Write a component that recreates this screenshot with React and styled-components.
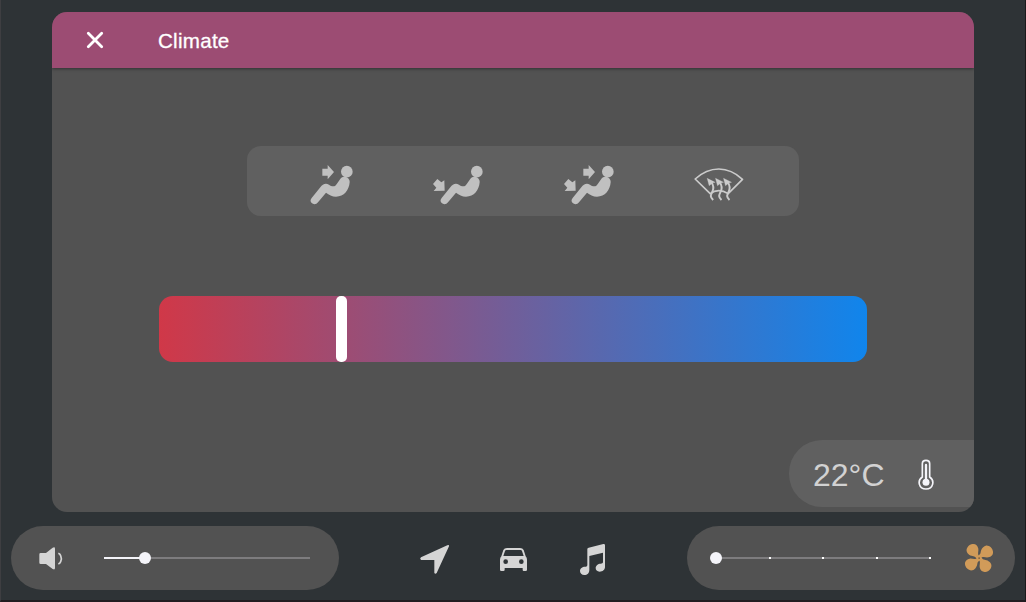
import React from "react";
import styled, { createGlobalStyle } from "styled-components";

const GlobalStyle = createGlobalStyle`
  * { box-sizing: border-box; }
  body { margin: 0; background: #2e3336; overflow: hidden; }
`;

const Screen = styled.div`
  width: 1026px;
  height: 602px;
  display: flex;
  flex-direction: column;
  padding: 12px 10px 0;
  background: #2e3336;
  border-left: 1px solid #3e3e41;
  border-right: 1px solid #1b191b;
  border-bottom: 2px solid #211c20;
  font-family: "Liberation Sans", Arial, sans-serif;
`;

const Panel = styled.main`
  width: 922px;
  height: 500px;
  margin-left: 41px;
  flex: none;
  display: flex;
  flex-direction: column;
  border-radius: 15px;
  overflow: hidden;
  background: #525252;
`;

const Header = styled.header`
  height: 56px;
  flex: none;
  display: flex;
  align-items: center;
  padding-left: 34px;
  gap: 54px;
  background: #9c4c73;
  box-shadow: 0 1px 3px rgba(0, 0, 0, 0.4);
`;

const CloseButton = styled.button`
  width: 18px;
  height: 18px;
  padding: 0;
  border: 0;
  background: none;
  display: flex;
`;

const Title = styled.h1`
  margin: 2px 0 0;
  font-size: 20.6px;
  letter-spacing: 0.25px;
  line-height: 24px;
  font-weight: 400;
  color: #fff;
  -webkit-text-stroke: 0.3px #fff;
`;

const Modes = styled.div`
  width: 552px;
  height: 70px;
  margin: 78px 0 0 195px;
  padding: 0 55px 0 56px;
  flex: none;
  display: flex;
  align-items: center;
  justify-content: space-between;
  border-radius: 14px;
  background: #606060;
`;

const ModeButton = styled.button`
  width: 50px;
  height: 40px;
  padding: 0;
  margin-top: 8px;
  border: 0;
  background: none;
  display: flex;
`;

const Gradient = styled.div`
  width: 708px;
  height: 66px;
  margin: 80px 0 0 107px;
  padding-left: 177px;
  flex: none;
  display: flex;
  align-items: center;
  border-radius: 14px;
  background: linear-gradient(90deg, #d03848, #1085ec);
`;

const Handle = styled.div`
  width: 11px;
  height: 66px;
  flex: none;
  border-radius: 5px;
  background: #fff;
`;

const Temperature = styled.div`
  width: 185px;
  height: 67px;
  margin: auto 0 5px auto;
  padding: 2px 40px 0 24px;
  display: flex;
  align-items: center;
  justify-content: space-between;
  border-radius: 33px 0 0 33px;
  background: #606060;
`;

const Degrees = styled.span`
  font-size: 32px;
  line-height: 36px;
  color: #d2d2d2;
`;

const Dock = styled.footer`
  height: 64px;
  margin-top: 14px;
  flex: none;
  display: flex;
  align-items: center;
  justify-content: space-between;
`;

const Pill = styled.section`
  width: 328px;
  height: 64px;
  display: flex;
  align-items: center;
  gap: ${(p) => p.$gap};
  padding-left: ${(p) => p.$left};
  border-radius: 32px;
  background: #525252;
`;

const Track = styled.div`
  width: ${(p) => p.$width};
  height: 2px;
  display: flex;
  align-items: center;
  justify-content: ${(p) => (p.$stepped ? "space-between" : "flex-start")};
  background: #7d7c7e;
`;

const Filled = styled.div`
  width: 41px;
  height: 2px;
  background: #f4f4f9;
`;

const Thumb = styled.div`
  width: 12px;
  height: 12px;
  flex: none;
  margin: 0 ${(p) => (p.$stepped ? "-5px" : "-6px")};
  border-radius: 50%;
  background: #f4f4f9;
`;

const Tick = styled.div`
  width: 2px;
  height: 2px;
  background: #fff;
`;

const Nav = styled.nav`
  display: flex;
  gap: 48px;
`;

const Icon = styled.svg`
  width: ${(p) => p.$w || 32}px;
  height: ${(p) => p.$h || 32}px;
  flex: none;
  display: block;
`;

const SILVER = "#c0c0c0";
const LIGHT = "#d5d5d5";

function Seat({ face, feet }) {
  return (
    <Icon $w={50} $h={40} viewBox="69 45 150 120" fill={SILVER}>
      <circle cx="200.5" cy="65" r="17.5" />
      <path d="M194 80C203 81 210 88 209 97C207 121 192 140 168 140C156 140 147 134 138 128L114 157C109 164 100 164 95 159C90 154 91 149 95 144L121 112C128 102 137 99 147 104C153 108 160 111 166 107C172 101 177 91 183 84C186 81 190 80 194 80Z" />
      {face && <path d="M127 56H143V45L162 66L143 88V77H127Z" />}
      {feet && <path d="M82 87L94 97L103 91L104 122L71 123L79 113L69 102Z" />}
    </Icon>
  );
}

function Defrost() {
  return (
    <Icon $w={50} $h={40} viewBox="71.5 45 150 120" fill="none" stroke="#cbcbcb" strokeWidth="5" strokeLinejoin="round">
      <path d="M120 131L75 87Q108 57 146 57Q184 57 217 88L174 131Q160 122 146 122Q132 122 120 131Z" />
      {[0, 25, 49].map((x) => (
        <g key={x} transform={`translate(${x} 0)`}>
          <path d="M129 150C117 139 123 133 127 124C131 115 129 104 123 96" strokeWidth="6" />
          <path d="M111 85L135 97L127 99L117 107Z" fill="#cbcbcb" strokeWidth="1" />
        </g>
      ))}
    </Icon>
  );
}

function Thermometer() {
  return (
    <Icon $w={16} $h={32} viewBox="413 88 48 96">
      <path d="M426 142V102C426 88.500 448 88.500 448 102V142C464 153 459 178 437 178C415 178 410 153 426 142Z" fill="none" stroke="#f4f4f9" strokeWidth="5" />
      <path d="M437 106V156" stroke="#f4f4f9" strokeWidth="7" strokeLinecap="round" />
      <circle cx="437" cy="158" r="10.500" fill="#f4f4f9" />
    </Icon>
  );
}

function Volume() {
  return (
    <Icon viewBox="105 126 96 96" fill={LIGHT}>
      <path d="M122 159H138L158 143Q165 139 165 146V204Q165 211 158 207L138 192H122Q118 192 118 188V163Q118 159 122 159Z" />
      <path d="M175 160Q180 162 182 167Q186 176 182 185Q180 190 175 192" fill="none" stroke={LIGHT} strokeWidth="5" />
    </Icon>
  );
}

function Navigate() {
  return (
    <Icon viewBox="51 33 96 96" overflow="visible" fill={LIGHT}>
      <path d="M142 43Q148 40 147 46L110 126Q106 131 103 126V87H63Q58 83 63 79Z" />
    </Icon>
  );
}

function Car() {
  return (
    <Icon viewBox="291 33 96 96" fill={LIGHT} fillRule="evenodd">
      <path d="M321 51H360Q368 51 371 57L377 76Q381 80 381 86V116Q381 120 377 120H371Q368 120 368 116V111H314V116Q314 120 310 120H304Q300 120 300 116V86Q300 80 304 76L310 57Q313 51 321 51ZM319 57Q316 57 315 60L310 75H371L366 60Q365 57 362 57ZM317 85A7 7 0 1 0 317 99A7 7 0 1 0 317 85ZM364 85A7 7 0 1 0 364 99A7 7 0 1 0 364 85Z" />
    </Icon>
  );
}

function Music() {
  return (
    <Icon viewBox="531 33 96 96" overflow="visible" fill={LIGHT}>
      <path d="M562 54Q562 51 566 50L610 39Q615 38 615 43V108C615 116 608 122 599 122C591 122 587 117 587 111C587 104 594 98 602 98C606 98 609 97 609 93V65L568 75V117C568 126 562 132 553 132C545 132 540 127 540 120C540 112 547 107 555 107C560 107 562 105 562 101Z" />
    </Icon>
  );
}

function Fan() {
  return (
    <Icon viewBox="879 81 96 96" fill="#d19b59">
      {[0, 90, 180, 270].map((turn) => (
        <path key={turn} transform={`rotate(${turn} 927 129)`} d="M927 129L925 120C923 114 926 108 925 101C923 92 917 86 908 87C897 88 888 99 890 109C893 119 903 123 910 124C914 124 917 127 919 130Z" />
      ))}
      <circle cx="927" cy="129" r="8" />
      <rect x="925" y="127" width="5" height="5" fill="#8a6840" />
    </Icon>
  );
}

export default function App() {
  return (
    <>
      <GlobalStyle />
      <Screen>
        <Panel>
          <Header>
            <CloseButton aria-label="Close">
              <Icon $w={18} $h={18} viewBox="0 0 18 18">
                <path d="M2.300 2.300L15.700 15.700M15.700 2.300L2.300 15.700" stroke="#fff" strokeWidth="2.8" strokeLinecap="round" />
              </Icon>
            </CloseButton>
            <Title>Climate</Title>
          </Header>
          <Modes>
            <ModeButton aria-label="Face"><Seat face /></ModeButton>
            <ModeButton aria-label="Feet"><Seat feet /></ModeButton>
            <ModeButton aria-label="Face and feet"><Seat face feet /></ModeButton>
            <ModeButton aria-label="Defrost"><Defrost /></ModeButton>
          </Modes>
          <Gradient>
            <Handle />
          </Gradient>
          <Temperature>
            <Degrees>22°C</Degrees>
            <Thermometer />
          </Temperature>
        </Panel>
        <Dock>
          <Pill $left="24px" $gap="37px">
            <Volume />
            <Track $width="206px">
              <Filled />
              <Thumb />
            </Track>
          </Pill>
          <Nav>
            <Navigate />
            <Car />
            <Music />
          </Nav>
          <Pill $left="28px" $gap="32px">
            <Track $width="216px" $stepped>
              <Thumb $stepped />
              <Tick />
              <Tick />
              <Tick />
              <Tick />
            </Track>
            <Fan />
          </Pill>
        </Dock>
      </Screen>
    </>
  );
}
